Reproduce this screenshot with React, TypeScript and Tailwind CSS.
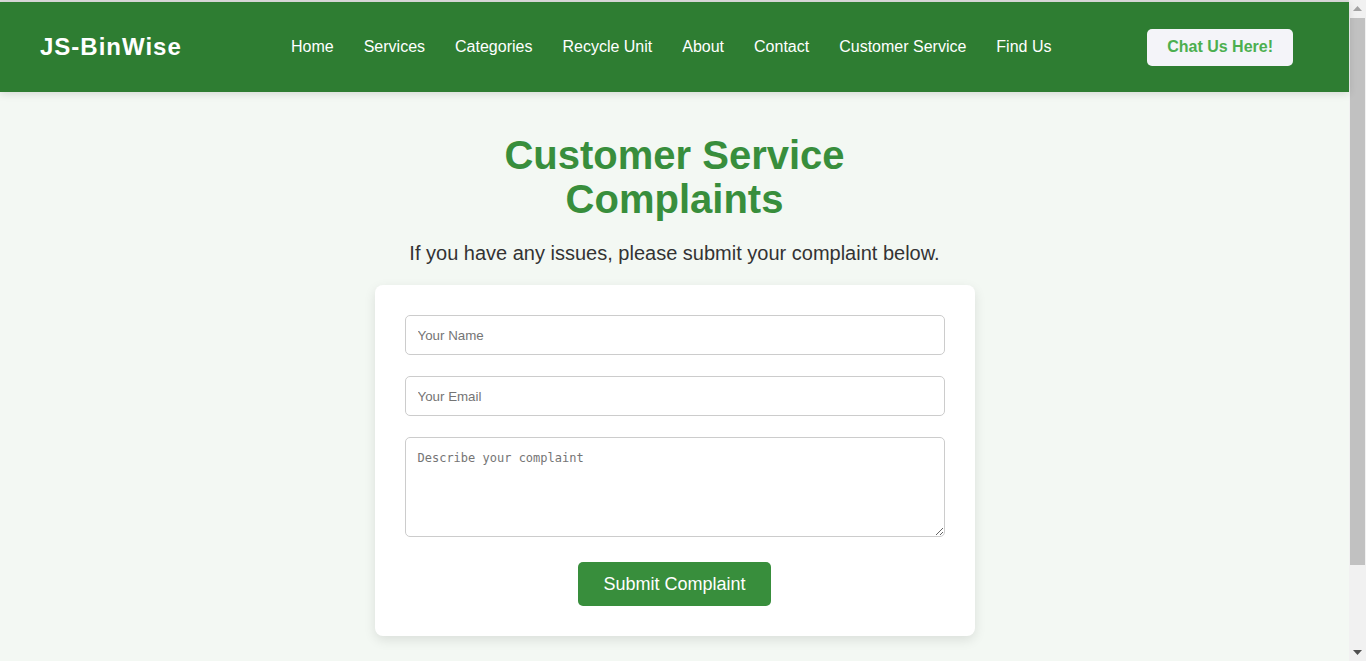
import React from "react";

const NAV_LINKS = [
  "Home",
  "Services",
  "Categories",
  "Recycle Unit",
  "About",
  "Contact",
  "Customer Service",
  "Find Us",
];

const Header = () => (
  <header className="bg-[#2e7d32] h-[90px] flex items-center pl-10 pr-[56px] shadow-[0_2px_8px_rgba(0,0,0,0.12)] relative z-10">
    <div className="w-[251px] shrink-0 text-white text-[24px] font-bold tracking-[1px]">
      JS-BinWise
    </div>
    <nav className="flex items-center gap-[30px]">
      {NAV_LINKS.map((link) => (
        <a
          key={link}
          href="#"
          className="text-white text-[16px] leading-[18px] whitespace-nowrap"
        >
          {link}
        </a>
      ))}
    </nav>
    <button className="ml-auto h-[37px] px-5 rounded-[5px] bg-[#f4f4f9] text-[#4caf50] text-[16px] font-bold">
      Chat Us Here!
    </button>
  </header>
);

const ComplaintForm = () => (
  <form
    className="w-[600px] mx-auto mt-5 bg-white rounded-lg p-[30px] shadow-[0_4px_12px_rgba(0,0,0,0.1)] flex flex-col"
    onSubmit={(e) => e.preventDefault()}
  >
    <div className="flex flex-col gap-[21px]">
      <input
        type="text"
        placeholder="Your Name"
        className="h-10 w-full px-3 border border-[#ccc] rounded-[5px] text-[13.33px] placeholder:text-[#757575] outline-none"
      />
      <input
        type="email"
        placeholder="Your Email"
        className="h-10 w-full px-3 border border-[#ccc] rounded-[5px] text-[13.33px] placeholder:text-[#757575] outline-none"
      />
      <textarea
        placeholder="Describe your complaint"
        className="h-[100px] w-full p-3 border border-[#ccc] rounded-[5px] text-[12px] leading-[16px] placeholder:text-[#757575] outline-none"
        style={{ fontFamily: '"DejaVu Sans Mono", monospace' }}
      />
    </div>
    <button
      type="submit"
      className="mt-[25px] self-center h-11 px-[25px] rounded-[5px] bg-[#388e3c] text-white text-[18px]"
    >
      Submit Complaint
    </button>
  </form>
);

// window scrollbar strip as seen in the screenshot
const ScrollBar = () => (
  <div className="w-[17px] shrink-0 bg-[#f1f1f1] flex flex-col items-center">
    <div className="h-[17px] flex items-center justify-center">
      <svg width="9" height="5" viewBox="0 0 9 5">
        <path d="M0 5 L4.5 0 L9 5 Z" fill="#a3a3a3" />
      </svg>
    </div>
    <div className="w-[15px] h-[547px] mt-px bg-[#c1c1c1]" />
    <div className="flex-1" />
    <div className="h-[17px] flex items-center justify-center">
      <svg width="9" height="5" viewBox="0 0 9 5">
        <path d="M0 0 L9 0 L4.5 5 Z" fill="#505050" />
      </svg>
    </div>
  </div>
);

export default function App() {
  return (
    <div
      className="h-[661px] flex overflow-hidden bg-[#f3f8f3]"
      style={{ fontFamily: '"Liberation Sans", Arial, sans-serif' }}
    >
      <div className="w-[1349px] shrink-0 flex flex-col">
        <div className="h-[2px] bg-[#dcdcdc]" />
        <Header />
        <main className="pt-[41px] text-center">
          <h1 className="max-w-[500px] mx-auto text-[40px] leading-[44px] font-bold text-[#388e3c]">
            Customer Service Complaints
          </h1>
          <p className="mt-[21px] text-[20px] leading-[23px] text-[#333]">
            If you have any issues, please submit your complaint below.
          </p>
          <ComplaintForm />
        </main>
      </div>
      <ScrollBar />
    </div>
  );
}
